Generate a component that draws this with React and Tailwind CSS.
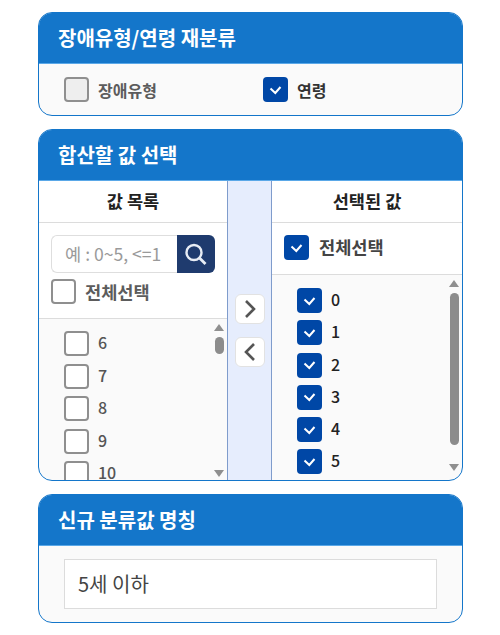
const FONT = "font-['Noto_Sans_CJK_KR','Noto_Sans',sans-serif]";

function Check({ checked, disabled }) {
  if (checked) {
    return (
      <span className="flex h-[25px] w-[25px] shrink-0 items-center justify-center rounded-[4px] bg-[#0047a6]">
        <svg width="13" height="10" viewBox="0 0 13 10" fill="none">
          <path d="M1.5 3.5 L6.3 8 L11.5 2" stroke="white" strokeWidth="2" />
        </svg>
      </span>
    );
  }
  return (
    <span className={`h-[25px] w-[25px] shrink-0 rounded-[4px] border-2 border-[#8f8f8f] ${disabled ? "bg-[#eeeeee]" : "bg-white"}`} />
  );
}

function Card({ title, children }) {
  return (
    <section className="overflow-hidden rounded-[14px] border border-[#1476ca] bg-[#fafafa]">
      <h2 className="flex h-[51px] items-center border-b border-[#5aa8e8] bg-[#1476ca] pl-[19px] text-[20px] font-bold text-white">
        {title}
      </h2>
      {children}
    </section>
  );
}

function Rows({ items, checked, gap, color }) {
  return (
    <ul className={`flex flex-col ${gap}`}>
      {items.map((n) => (
        <li key={n} className="flex items-center gap-[9px]">
          <Check checked={checked} />
          <span className={`pb-[2px] text-[16px] font-medium leading-[23px] ${color}`}>{n}</span>
        </li>
      ))}
    </ul>
  );
}

function Scrollbar({ thumb, tail }) {
  return (
    <div className="mr-[2px] flex w-[12px] shrink-0 flex-col items-center pt-[5px]">
      <span className="h-0 w-0 border-x-[5px] border-b-[7px] border-x-transparent border-b-[#8f8f8f]" />
      <span className={`mt-[6px] w-[9px] rounded-[5px] bg-[#8c8c8c] ${thumb}`} />
      <span className={`mt-auto h-0 w-0 border-x-[5px] border-t-[7px] border-x-transparent border-t-[#8f8f8f] ${tail}`} />
    </div>
  );
}

function MoveButton({ d }) {
  return (
    <button className="flex h-[30px] w-[30px] items-center justify-center rounded-[6px] border border-[#e2e2e2] bg-white">
      <svg width="14" height="20" viewBox="0 0 14 20" fill="none">
        <path d={d} stroke="#555555" strokeWidth="2.6" />
      </svg>
    </button>
  );
}

export default function App() {
  return (
    <div className={`flex h-[635px] w-[500px] flex-col gap-[13px] bg-white pl-[38px] pr-[37px] pt-[12px] ${FONT}`}>
      <Card title="장애유형/연령 재분류">
        <div className="flex h-[51px] items-center pl-[25px] text-[16px] font-bold">
          <label className="flex w-[199px] items-center gap-[9px] text-[#5c5c5c]">
            <Check disabled />
            장애유형
          </label>
          <label className="flex items-center gap-[9px] text-[#333333]">
            <Check checked />
            연령
          </label>
        </div>
      </Card>

      <Card title="합산할 값 선택">
        <div className="flex h-[299px]">
          <div className="flex w-[189px] shrink-0 flex-col border-r border-[#7f9ccc]">
            <div className="flex h-[42px] shrink-0 items-center justify-center border-b border-[#dcdcdc] bg-white text-[17.6px] font-bold text-[#222222]">
              값 목록
            </div>
            <div className="h-[96px] shrink-0 border-b border-[#dcdcdc] bg-white px-[12px] pt-[12px]">
              <div className="flex h-[38px]">
                <div className="flex w-[126px] items-center overflow-hidden whitespace-nowrap rounded-l-[6px] border border-r-0 border-[#dedede] bg-white pl-[13px] text-[17.6px] text-[#9a9a9a]">
                  예 : 0~5, &lt;=1
                </div>
                <div className="flex w-[38px] items-center justify-center rounded-r-[6px] bg-[#1f3b6e]">
                  <svg width="24" height="24" viewBox="0 0 24 24" fill="none">
                    <circle cx="10" cy="10.5" r="7.5" stroke="#e8edf5" strokeWidth="2.4" />
                    <path d="M15.5 16 L21.5 22" stroke="#e8edf5" strokeWidth="2.8" />
                  </svg>
                </div>
              </div>
              <label className="mt-[6px] flex items-center gap-[9px] text-[17.6px] font-bold leading-[25px] text-[#5c5c5c]">
                <Check />
                전체선택
              </label>
            </div>
            <div className="flex min-h-0 flex-1 overflow-hidden">
              <div className="flex-1 overflow-hidden pl-[25px] pt-[12px]">
                <Rows items={[6, 7, 8, 9, 10]} gap="gap-[7.5px]" color="text-[#555555]" />
              </div>
              <Scrollbar thumb="h-[17px]" tail="mb-[3px]" />
            </div>
          </div>

          <div className="flex w-[44px] shrink-0 flex-col items-center border-r border-[#7f9ccc] bg-[#e6edfd] pl-[1px] pt-[113px]">
            <MoveButton d="M3 2 L11 10 L3 18" />
            <div className="h-[13px]" />
            <MoveButton d="M11 2 L3 10 L11 18" />
          </div>

          <div className="flex min-w-0 flex-1 flex-col">
            <div className="flex h-[42px] shrink-0 items-center justify-center border-b border-[#dcdcdc] bg-white text-[17.6px] font-bold text-[#222222]">
              선택된 값
            </div>
            <label className="flex h-[52px] shrink-0 items-start gap-[10px] border-b border-[#dcdcdc] bg-white pl-[12px] pt-[12px] text-[17.6px] font-bold leading-[24px] text-[#444444]">
              <Check checked />
              전체선택
            </label>
            <div className="flex min-h-0 flex-1 overflow-hidden">
              <div className="flex-1 overflow-hidden pl-[25px] pt-[13px]">
                <Rows items={[0, 1, 2, 3, 4, 5]} checked gap="gap-[7.3px]" color="text-[#222222]" />
              </div>
              <Scrollbar thumb="h-[152px]" tail="mb-[9px]" />
            </div>
          </div>
        </div>
      </Card>

      <Card title="신규 분류값 명칭">
        <div className="h-[76px] px-[25px] pt-[13px]">
          <div className="flex h-[50px] items-center border border-[#dcdcdc] bg-white pl-[13px] text-[20px] text-[#444444]">
            5세 이하
          </div>
        </div>
      </Card>
    </div>
  );
}
